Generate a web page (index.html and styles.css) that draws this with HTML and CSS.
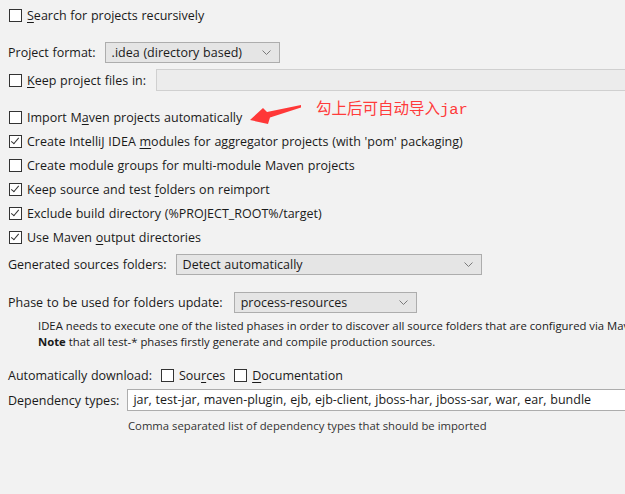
FILE: index.html
```html
<!DOCTYPE html>
<html lang="en">
<head>
    <meta charset="UTF-8">
    <title>Maven Importing</title>
    <link rel="stylesheet" href="styles.css">
</head>
<body>
    <div id="panel">
        <div class="row first">
            <span class="check"></span>
            <span class="label"><u>S</u>earch for projects recursively</span>
        </div>

        <div class="row format">
            <span class="label">Project format:</span>
            <div class="select formatSelect">
                <span>.idea (directory based)</span>
                <svg class="chevron" width="9" height="5" viewBox="0 0 9 5"><path d="M0.5 0.5 L4.5 4.5 L8.5 0.5" fill="none" stroke="#7a7a7a" stroke-width="1"/></svg>
            </div>
        </div>

        <div class="row keep">
            <span class="check"></span>
            <span class="label"><u>K</u>eep project files in:</span>
            <div class="field disabled"></div>
        </div>

        <div class="group">
            <div class="row">
                <span class="check"></span>
                <span class="label">Import M<u>a</u>ven projects automatically</span>
            </div>
            <div class="row">
                <span class="check on"></span>
                <span class="label">Create IntelliJ IDEA <u>m</u>odules for aggregator projects (with 'pom' packaging)</span>
            </div>
            <div class="row">
                <span class="check"></span>
                <span class="label">Create module <u>g</u>roups for multi-module Maven projects</span>
            </div>
            <div class="row">
                <span class="check on"></span>
                <span class="label">Keep source and test <u>f</u>olders on reimport</span>
            </div>
            <div class="row">
                <span class="check on"></span>
                <span class="label">Exclude build directory (%PROJECT_ROOT%/target)</span>
            </div>
            <div class="row">
                <span class="check on"></span>
                <span class="label">Use Maven <u>o</u>utput directories</span>
            </div>
        </div>

        <div class="row generated">
            <span class="label">Generated sources folders:</span>
            <div class="select genSelect">
                <span>Detect automatically</span>
                <svg class="chevron" width="9" height="5" viewBox="0 0 9 5"><path d="M0.5 0.5 L4.5 4.5 L8.5 0.5" fill="none" stroke="#7a7a7a" stroke-width="1"/></svg>
            </div>
        </div>

        <div class="row phase">
            <span class="label">Phase to be used for folders update:</span>
            <div class="select phaseSelect">
                <span>process-resources</span>
                <svg class="chevron" width="9" height="5" viewBox="0 0 9 5"><path d="M0.5 0.5 L4.5 4.5 L8.5 0.5" fill="none" stroke="#7a7a7a" stroke-width="1"/></svg>
            </div>
        </div>
        <div class="note">
            <div>IDEA needs to execute one of the listed phases in order to discover all source folders that are configured via Mav</div>
            <div><b>Note</b> that all test-* phases firstly generate and compile production sources.</div>
        </div>

        <div class="row download">
            <span class="label">Automatically download:</span>
            <span class="check"></span>
            <span class="label">Sou<u>r</u>ces</span>
            <span class="check"></span>
            <span class="label"><u>D</u>ocumentation</span>
        </div>
        <div class="row deprow">
            <span class="label">Dependency types:</span>
            <div class="field deps">jar, test-jar, maven-plugin, ejb, ejb-client, jboss-har, jboss-sar, war, ear, bundle</div>
        </div>
        <div class="hint">Comma separated list of dependency types that should be imported</div>

        <svg class="arrow" width="60" height="24" viewBox="248 103 60 24">
            <polygon points="250,120 263,108 267,112 301,105 301,107.5 270,117.5 268,124" fill="#ff3838"/>
        </svg>
        <div class="annotation">勾上后可自动导入<span class="mono">jar</span></div>
    </div>
</body>
</html>
```

FILE: styles.css
```css
body {
    margin: 0;
    background-color: #f2f2f2;
    overflow: hidden;
    font-family: 'Open Sans', 'Noto Sans', sans-serif;
    font-size: 12.5px;
    word-spacing: 0.5px;
    color: #1a1a1a;
}
#panel {
    position: relative;
    height: 494px;
    padding-left: 8px;
    overflow: hidden;
}
.row {
    display: flex;
    align-items: center;
    height: 24px;
    white-space: nowrap;
}
.row.first {
    margin-top: 3px;
}
.row.format {
    margin-top: 13px;
}
.row.keep {
    margin-top: 4px;
}
.group {
    margin-top: 13px;
}
.row.generated {
    margin-top: 3px;
}
.row.phase {
    margin-top: 14px;
}
.label u {
    text-decoration-thickness: 1px;
    text-underline-offset: 2px;
}
.check {
    position: relative;
    flex: none;
    width: 11px;
    height: 11px;
    border: 1px solid #333333;
    background-color: #ffffff;
    margin: 0 5px 0 1px;
}
.check.on::after {
    content: "";
    position: absolute;
    left: 3px;
    top: 0px;
    width: 3px;
    height: 7px;
    border-right: 1px solid #333333;
    border-bottom: 1px solid #333333;
    transform: rotate(40deg);
}
.select {
    display: flex;
    align-items: center;
    justify-content: space-between;
    box-sizing: border-box;
    height: 21px;
    padding: 0 8px 0 6px;
    background-color: #e5e5e5;
    border: 1px solid #adadad;
}
.formatSelect {
    width: 175px;
    margin-left: 9px;
}
.genSelect {
    width: 306px;
    margin-left: 9px;
}
.phaseSelect {
    width: 183px;
    margin-left: 11px;
}
.field {
    box-sizing: border-box;
    height: 22px;
    flex: 1;
}
.field.disabled {
    margin-left: 10px;
    margin-right: -2px;
    background-color: #ececec;
    border: 1px solid #d0d0d0;
}
.field.deps {
    margin-left: 8px;
    margin-right: -2px;
    background-color: #ffffff;
    border: 1px solid #adadad;
    padding: 0 5px;
    line-height: 20px;
    overflow: hidden;
}
.note {
    margin: 4px 0 0 30px;
    font-size: 11.3px;
    word-spacing: 0;
    line-height: 16px;
    white-space: nowrap;
}
.row.download {
    margin-top: 13px;
}
.download .label:first-child {
    margin-right: 8px;
}
.download .label:nth-child(3) {
    margin-right: 8px;
}
.row.deprow {
    margin-top: 1px;
}
.hint {
    margin: 6px 0 0 120px;
    font-size: 11.3px;
    word-spacing: 0;
    line-height: 16px;
    color: #333333;
}
.arrow {
    position: absolute;
    left: 248px;
    top: 103px;
}
.annotation {
    position: absolute;
    left: 316px;
    top: 96px;
    font-family: 'Noto Sans CJK SC', sans-serif;
    font-size: 15.5px;
    word-spacing: 0;
    color: #ff3b3b;
}
.mono {
    font-family: 'Liberation Mono', monospace;
}
```
